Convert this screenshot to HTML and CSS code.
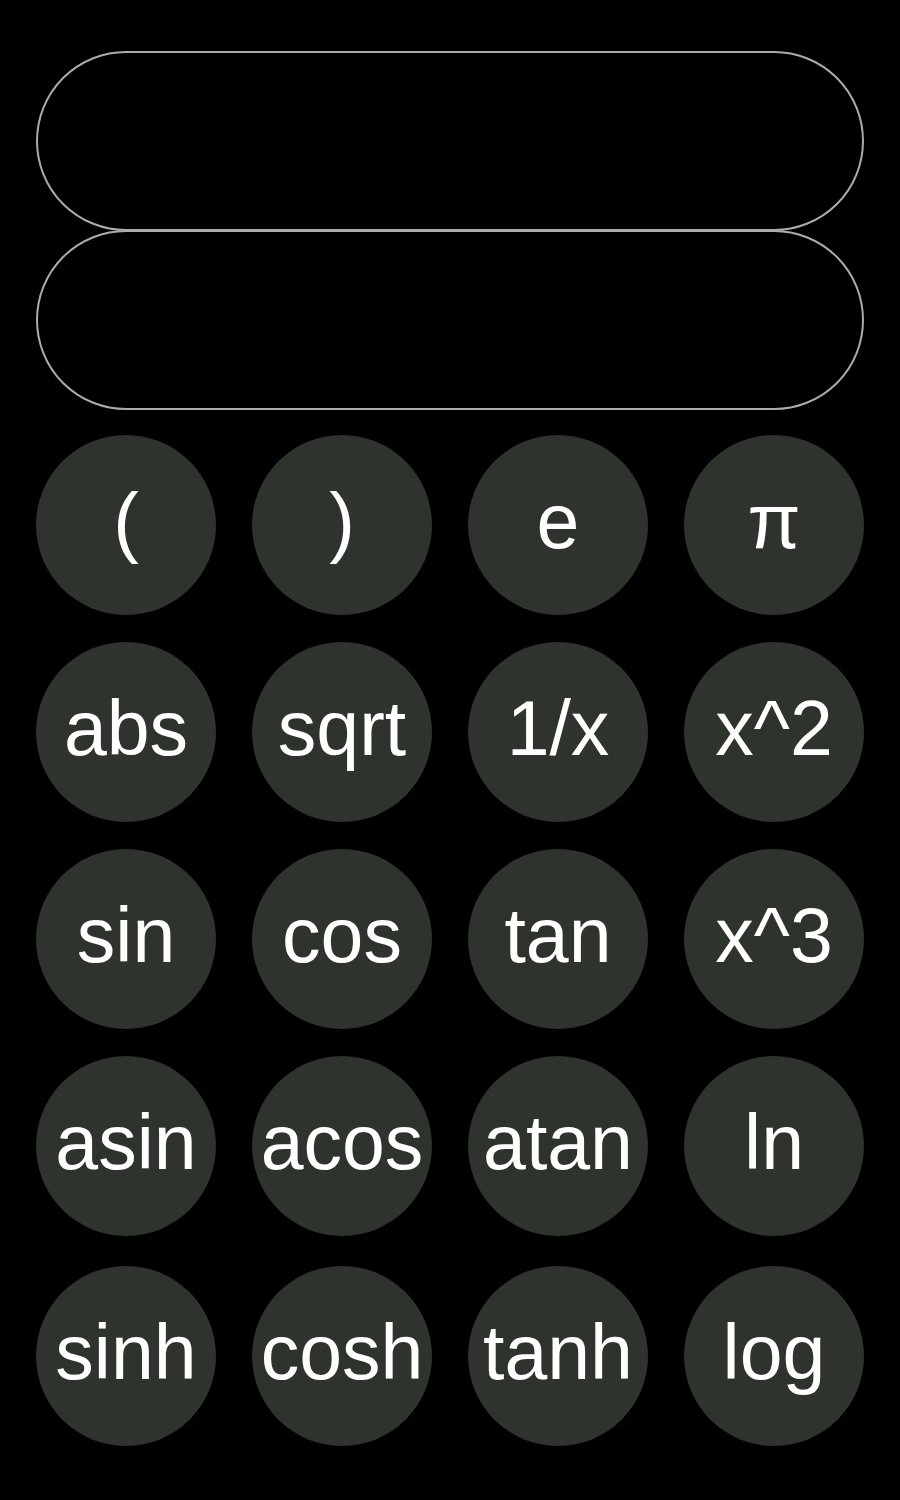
FILE: index.html
```html
<!DOCTYPE html>
<html>
<head>
<meta charset="utf-8">
<link rel="stylesheet" href="styles.css">
</head>
<body>
<div class="calc">
  <div class="display"></div>
  <div class="display"></div>
  <div class="keys">
    <div class="key">(</div>
    <div class="key">)</div>
    <div class="key">e</div>
    <div class="key">π</div>
    <div class="key">abs</div>
    <div class="key">sqrt</div>
    <div class="key">1/x</div>
    <div class="key">x^2</div>
    <div class="key">sin</div>
    <div class="key">cos</div>
    <div class="key">tan</div>
    <div class="key">x^3</div>
    <div class="key">asin</div>
    <div class="key">acos</div>
    <div class="key">atan</div>
    <div class="key">ln</div>
    <div class="key last">sinh</div>
    <div class="key last">cosh</div>
    <div class="key last">tanh</div>
    <div class="key last">log</div>
  </div>
</div>
</body>
</html>
```
FILE: styles.css
```css
html, body {
  margin: 0;
  padding: 0;
  background: #000;
}
body {
  width: 900px;
  height: 1500px;
  font-family: "Liberation Sans", Arial, sans-serif;
}
.calc {
  padding: 51px 36px 0 36px;
  display: flex;
  flex-direction: column;
}
.display {
  box-sizing: border-box;
  height: 180px;
  border: 2px solid #ababab;
  border-radius: 90px;
}
.display + .display {
  margin-top: -1px;
}
.keys {
  margin-top: 25px;
  display: grid;
  grid-template-columns: repeat(4, 180px);
  column-gap: 36px;
  row-gap: 27px;
}
.key {
  box-sizing: border-box;
  width: 180px;
  height: 180px;
  padding-bottom: 8px;
  border-radius: 50%;
  background: #2f332e;
  color: #fff;
  display: flex;
  align-items: center;
  justify-content: center;
  font-size: 77px;
  white-space: nowrap;
}
.key.last {
  margin-top: 3px;
}
```
